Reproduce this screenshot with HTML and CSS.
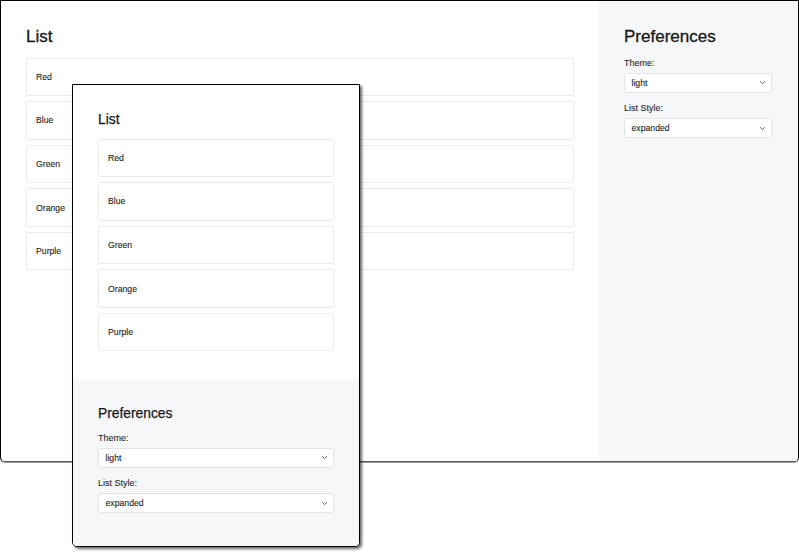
FILE: index.html
```html
<!DOCTYPE html>
<html lang="en">
<head>
<meta charset="utf-8">
<title>List Preferences</title>
<link rel="stylesheet" href="styles.css">
</head>
<body>
<div class="stage">
  <div class="window window-wide">
    <section class="main">
      <h1 class="title">List</h1>
      <div class="list">
        <div class="item">Red</div>
        <div class="item">Blue</div>
        <div class="item">Green</div>
        <div class="item">Orange</div>
        <div class="item">Purple</div>
      </div>
    </section>
    <aside class="prefs prefs-side">
      <h2 class="title">Preferences</h2>
      <div class="field">
        <div class="label">Theme:</div>
        <div class="select"><span>light</span><svg class="chev" width="7" height="5" viewBox="0 0 7 5"><path d="M1 1.2 L3.5 3.6 L6 1.2" fill="none" stroke="#555" stroke-width="0.9"/></svg></div>
      </div>
      <div class="field">
        <div class="label">List Style:</div>
        <div class="select"><span>expanded</span><svg class="chev" width="7" height="5" viewBox="0 0 7 5"><path d="M1 1.2 L3.5 3.6 L6 1.2" fill="none" stroke="#555" stroke-width="0.9"/></svg></div>
      </div>
    </aside>
  </div>

  <div class="window window-narrow">
    <section class="main main-narrow">
      <h1 class="title title-small">List</h1>
      <div class="list">
        <div class="item">Red</div>
        <div class="item">Blue</div>
        <div class="item">Green</div>
        <div class="item">Orange</div>
        <div class="item">Purple</div>
      </div>
    </section>
    <aside class="prefs prefs-bottom">
      <h2 class="title title-small">Preferences</h2>
      <div class="field">
        <div class="label">Theme:</div>
        <div class="select"><span>light</span><svg class="chev" width="7" height="5" viewBox="0 0 7 5"><path d="M1 1.2 L3.5 3.6 L6 1.2" fill="none" stroke="#555" stroke-width="0.9"/></svg></div>
      </div>
      <div class="field">
        <div class="label">List Style:</div>
        <div class="select"><span>expanded</span><svg class="chev" width="7" height="5" viewBox="0 0 7 5"><path d="M1 1.2 L3.5 3.6 L6 1.2" fill="none" stroke="#555" stroke-width="0.9"/></svg></div>
      </div>
    </aside>
  </div>
</div>
</body>
</html>
```

FILE: styles.css
```css
html, body {
  margin: 0;
  padding: 0;
  background: #ffffff;
}

body {
  font-family: "Liberation Sans", Arial, Helvetica, sans-serif;
  color: #1a1a1a;
}

.stage {
  position: relative;
  width: 799px;
  height: 552px;
  overflow: hidden;
}

.window {
  box-sizing: border-box;
  border: 1px solid #000;
  border-radius: 0 0 5px 5px;
  overflow: hidden;
  background: #fff;
}

.window-wide {
  width: 799px;
  height: 462px;
  display: flex;
  border-bottom-color: #5a5a5a;
  box-shadow: 0 1px 0 #9a9a9a;
}

.window-narrow {
  position: absolute;
  left: 72px;
  top: 84px;
  width: 288px;
  height: 463px;
  display: flex;
  flex-direction: column;
  box-shadow: 2px 2px 3px rgba(0, 0, 0, 0.6);
}

.main {
  flex: 1;
  padding: 26px 25px;
}

.main-narrow {
  flex: none;
  padding: 26px 25px 28px;
}

.title {
  margin: 0 0 10.5px;
  font-size: 17px;
  line-height: 20px;
  font-weight: normal;
  color: #161616;
  -webkit-text-stroke: 0.3px #161616;
}

.title-small {
  font-size: 13.8px;
  line-height: 17px;
  -webkit-text-stroke: 0.25px #161616;
}

.list {
  display: flex;
  flex-direction: column;
  gap: 5px;
}

.item {
  box-sizing: border-box;
  height: 38.6px;
  display: flex;
  align-items: center;
  padding: 0 9px;
  border: 1px solid #ebebeb;
  border-radius: 2px;
  font-size: 8.7px;
  color: #1c1c1c;
  -webkit-text-stroke: 0.1px #1c1c1c;
}

.prefs {
  background: #f6f7f9;
  box-sizing: border-box;
}

.prefs-side {
  width: 199px;
  flex: none;
  padding: 26px 26px 26px 25px;
}

.prefs-bottom {
  flex: 1;
  padding: 26px 25px;
}

.field {
  margin-bottom: 10.5px;
}

.label {
  font-size: 9px;
  line-height: 11px;
  margin-bottom: 4px;
  color: #2a2a2a;
  -webkit-text-stroke: 0.1px #2a2a2a;
}

.select {
  box-sizing: border-box;
  height: 20px;
  display: flex;
  align-items: center;
  justify-content: space-between;
  padding: 0 5px 0 6.5px;
  background: #fff;
  border: 1px solid #e2e4e8;
  border-radius: 3px;
  font-size: 8.7px;
  color: #1c1c1c;
  -webkit-text-stroke: 0.1px #1c1c1c;
}

.chev {
  display: block;
}
```
